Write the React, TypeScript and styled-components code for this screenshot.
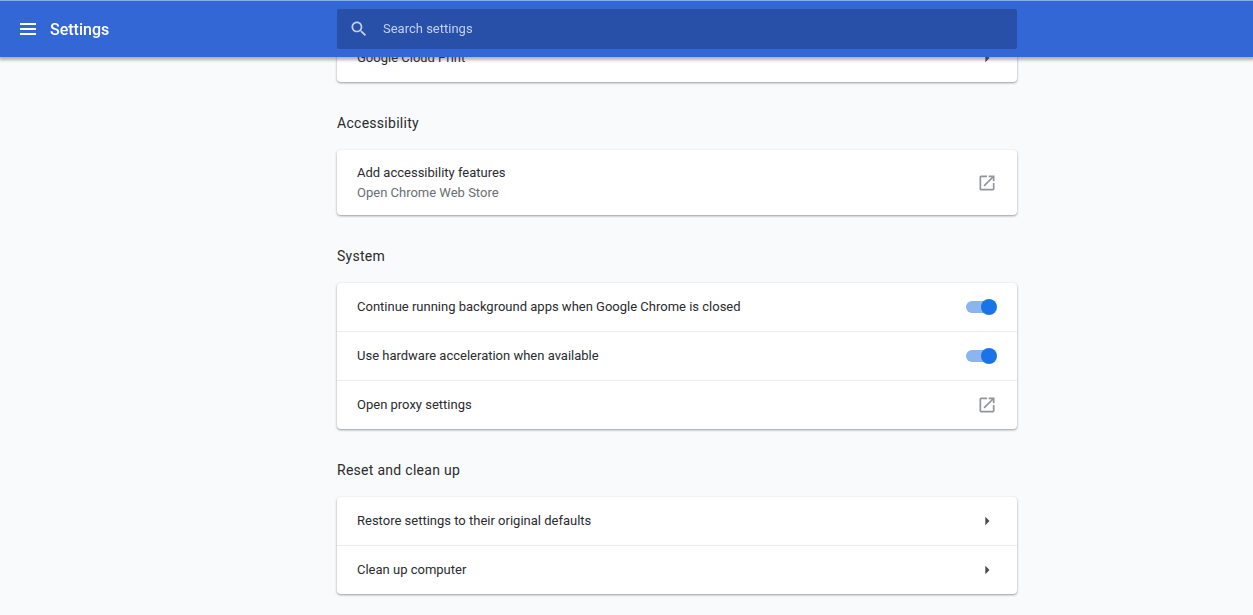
import React, { useId, useState } from "react";
import styled, { createGlobalStyle, css } from "styled-components";

const GlobalStyle = createGlobalStyle`
  *, *::before, *::after { box-sizing: border-box; }
  body {
    margin: 0;
    background: #f9fafb;
    color: #2a2b2e;
    font-family: Roboto, "Liberation Sans", sans-serif;
    font-size: 13px;
    line-height: 20px;
  }
`;

const pageGrid = css`
  display: grid;
  grid-template-columns: 101px minmax(0, 1fr) minmax(0, 680px) minmax(0, 1fr);
`;

const Header = styled.header`
  ${pageGrid}
  align-items: center;
  position: fixed;
  inset: 0 0 auto;
  z-index: 1;
  height: 57px;
  border-top: 1px solid #86aef0;
  background: #3367d6;
  color: #fff;
  box-shadow: 0 2px 3px 1px rgba(60, 64, 67, 0.4);
`;

const Brand = styled.div`
  grid-column: 1 / 3;
  display: flex;
  align-items: center;
  gap: 14px;
  padding-left: 20px;
`;

const MenuButton = styled.button`
  display: flex;
  padding: 0;
  border: 0;
  background: none;
  color: inherit;
  cursor: pointer;
`;

const Title = styled.h1`
  margin: 0;
  padding-top: 2px;
  font-size: 16px;
  font-weight: 500;
`;

const SearchBox = styled.label`
  grid-column: 3;
  display: flex;
  align-items: center;
  gap: 14px;
  height: 40px;
  padding: 0 12px;
  border-radius: 2px;
  background: #2850a9;
  color: #c2d1f3;
`;

const SearchInput = styled.input`
  flex: 1;
  min-width: 0;
  padding: 0;
  border: 0;
  outline: 0;
  background: none;
  color: #fff;
  font: inherit;
  &::placeholder {
    color: #c2d1f3;
    opacity: 1;
  }
`;

const Main = styled.main`
  ${pageGrid}
  padding: 34px 0 20px;
`;

const Column = styled.div`
  grid-column: 3;
`;

const SectionTitle = styled.h2`
  margin: 0;
  padding: 31px 0 17px;
  font-size: 14px;
  font-weight: 400;
  letter-spacing: 0.02em;
`;

const Card = styled.div`
  border-radius: 4px;
  background: #fff;
  box-shadow: 0 1px 2px 0 rgba(60, 64, 67, 0.35), 0 1px 3px 0 rgba(60, 64, 67, 0.2);
`;

const rowStyle = css<{ $tall?: boolean }>`
  display: flex;
  align-items: center;
  justify-content: space-between;
  width: 100%;
  height: ${(p) => (p.$tall ? 65 : 48)}px;
  padding: 0 20px;
  border: 0;
  background: none;
  color: inherit;
  font: inherit;
  text-align: left;
  cursor: pointer;
`;

const RowButton = styled.button<{ $tall?: boolean }>`
  ${rowStyle}
`;

const RowLabel = styled.label`
  ${rowStyle}
`;

const RowItem = styled.div`
  & + & {
    border-top: 1px solid #ececec;
  }
`;

const Secondary = styled.span`
  display: block;
  color: #6b6e72;
`;

const Switch = styled.input`
  appearance: none;
  display: flex;
  align-items: center;
  width: 31px;
  height: 16px;
  margin: 0;
  cursor: pointer;
  &::before {
    content: "";
    width: 28px;
    height: 12px;
    border-radius: 6px;
    background: #bdc1c6;
  }
  &::after {
    content: "";
    width: 16px;
    height: 16px;
    margin-left: -28px;
    border-radius: 50%;
    background: #fff;
    box-shadow: 0 1px 2px rgba(0, 0, 0, 0.4);
  }
  &:checked::before {
    background: #8cb4ef;
  }
  &:checked::after {
    margin-left: -13px;
    background: #1a73e8;
    box-shadow: none;
  }
`;

const Glyph = styled.svg`
  flex: none;
  display: block;
  fill: currentColor;
`;

const RowGlyph = styled(Glyph)<{ $tone: string }>`
  color: ${(p) => p.$tone};
`;

const OpenIcon = () => (
  <RowGlyph $tone="#919498" width="20" height="20" viewBox="0 0 24 24" aria-hidden="true">
    <path d="M19 19H5V5h7V3H5c-1.110 0-2 .9-2 2v14c0 1.100.89 2 2 2h14c1.100 0 2-.9 2-2v-7h-2v7zM14 3v2h3.590l-9.830 9.830 1.410 1.410L19 6.410V10h2V3h-7z" />
  </RowGlyph>
);

const ArrowIcon = () => (
  <RowGlyph $tone="#4a4d51" width="20" height="20" viewBox="0 0 24 24" aria-hidden="true">
    <path d="M10 7l5 5-5 5z" />
  </RowGlyph>
);

type LinkRowProps = { label: string; detail?: string; external?: boolean };

const LinkRow = ({ label, detail, external }: LinkRowProps) => (
  <RowItem>
    <RowButton type="button" $tall={Boolean(detail)}>
      <span>
        {label}
        {detail && <Secondary>{detail}</Secondary>}
      </span>
      {external ? <OpenIcon /> : <ArrowIcon />}
    </RowButton>
  </RowItem>
);

const SwitchRow = ({ label }: { label: string }) => {
  const id = useId();
  const [on, setOn] = useState(true);
  return (
    <RowItem>
      <RowLabel htmlFor={id}>
        {label}
        <Switch id={id} type="checkbox" role="switch" checked={on} onChange={() => setOn(!on)} />
      </RowLabel>
    </RowItem>
  );
};

export default function App() {
  return (
    <>
      <GlobalStyle />
      <Header>
        <Brand>
          <MenuButton type="button" aria-label="Main menu">
            <Glyph width="16" height="12" viewBox="0 0 16 12" aria-hidden="true">
              <path d="M0 0h16v2H0zM0 5h16v2H0zM0 10h16v2H0z" />
            </Glyph>
          </MenuButton>
          <Title>Settings</Title>
        </Brand>
        <SearchBox>
          <Glyph width="20" height="20" viewBox="0 0 24 24" aria-hidden="true">
            <path d="M15.500 14h-.79l-.28-.27C15.410 12.590 16 11.110 16 9.500 16 5.910 13.090 3 9.500 3S3 5.910 3 9.500 5.910 16 9.500 16c1.610 0 3.090-.59 4.230-1.570l.27.28v.79l5 4.990L20.490 19l-4.990-5zm-6 0C7.010 14 5 11.990 5 9.500S7.010 5 9.500 5 14 7.010 14 9.500 11.990 14 9.500 14z" />
          </Glyph>
          <SearchInput type="text" placeholder="Search settings" aria-label="Search settings" />
        </SearchBox>
      </Header>
      <Main>
        <Column>
          <Card>
            <LinkRow label="Google Cloud Print" />
          </Card>
          <section>
            <SectionTitle>Accessibility</SectionTitle>
            <Card>
              <LinkRow label="Add accessibility features" detail="Open Chrome Web Store" external />
            </Card>
          </section>
          <section>
            <SectionTitle>System</SectionTitle>
            <Card>
              <SwitchRow label="Continue running background apps when Google Chrome is closed" />
              <SwitchRow label="Use hardware acceleration when available" />
              <LinkRow label="Open proxy settings" external />
            </Card>
          </section>
          <section>
            <SectionTitle>Reset and clean up</SectionTitle>
            <Card>
              <LinkRow label="Restore settings to their original defaults" />
              <LinkRow label="Clean up computer" />
            </Card>
          </section>
        </Column>
      </Main>
    </>
  );
}
